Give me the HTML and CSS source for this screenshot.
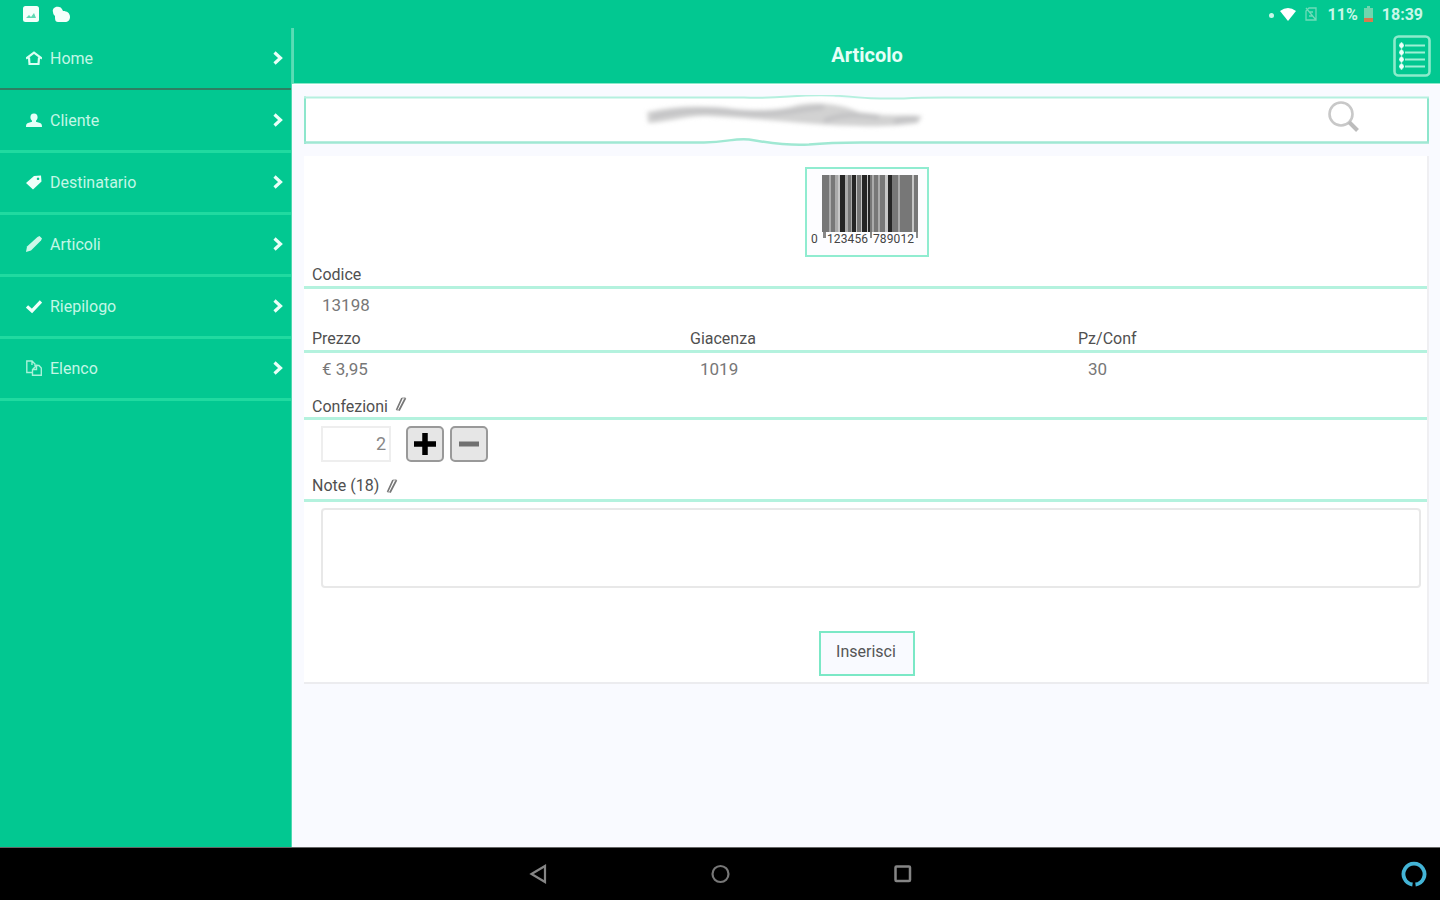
FILE: index.html
```html
<!DOCTYPE html>
<html lang="it">
<head>
<meta charset="UTF-8">
<title>Articolo</title>
<link rel="stylesheet" href="styles.css">
</head>
<body>
    <div class="status-bar">
        <div class="status-left">
            <svg width="16" height="16" viewBox="0 0 16 16"><rect width="16" height="16" rx="2.500" fill="#f4fffb"/><path d="M3 12l3-3 2 2 3-4 2 5z" fill="#5fd9b4"/></svg>
            <svg width="18" height="17" viewBox="0 0 18 17"><path d="M1 6C0 3 3 0 7 1c2 0 3 2 4 4 4 0 7 2 7 6 0 3-2 5-5 5H6c-3 0-3-3-3-6C2 9 1 8 1 6z" fill="#f4fffb"/></svg>
        </div>
        <div class="status-right">
            <span class="dot"></span>
            <svg class="wifi" width="16" height="13" viewBox="0 0 16 13"><path d="M0 3Q8-3 16 3L8 13z" fill="#fff"/></svg>
            <svg class="sim" width="12" height="14" viewBox="0 0 12 14"><path d="M4 1h7v12H1V4zM1 1l10 12M4 5h4M4 9h4" fill="none" stroke="#6fdcb9" stroke-width="1.300"/></svg>
            <span class="percent">11%</span>
            <svg class="battery" width="9" height="16" viewBox="0 0 9 16"><path d="M3 0h3v2h3v14H0V2h3z" fill="#6fd6ae"/><path d="M0 12h9v4H0z" fill="#d8794f"/></svg>
            <span class="time">18:39</span>
        </div>
    </div>

    <div class="main">
        <div class="sidebar">
            <a href="#" class="item active">
                <svg width="16" height="16" viewBox="0 0 16 16"><path d="M0 8.500L8 2.500l8 6M3 7.500l.5 6.500h9l.5-6.500" fill="none" stroke="#d9fff2" stroke-width="2.200"/></svg>
                <span>Home</span>
                <svg class="arrow" width="10" height="14" viewBox="0 0 10 14"><path d="M1.500 1.500L7.500 7l-6 5.500" fill="none" stroke="#e9fff8" stroke-width="3.200"/></svg>
            </a>
            <a href="#" class="item">
                <svg width="16" height="16" viewBox="0 0 16 16"><path d="M8 1.500c2.500 0 3.600 1.700 3.600 3.700 0 1.500-.7 2.800-1.600 3.500v1L14 11c1.500.5 2 1.500 2 4H0c0-2.500.5-3.500 2-4l4-1.300v-1c-.9-.7-1.600-2-1.600-3.500 0-2 1.100-3.700 3.600-3.700z" fill="#e6fff7"/></svg>
                <span>Cliente</span>
                <svg class="arrow" width="10" height="14" viewBox="0 0 10 14"><path d="M1.500 1.500L7.500 7l-6 5.500" fill="none" stroke="#e9fff8" stroke-width="3.200"/></svg>
            </a>
            <a href="#" class="item">
                <svg width="16" height="16" viewBox="0 0 16 16"><path d="M0 9l8-7 7-.5.5 6L7 15.500zM12 3.500a1.300 1.300 0 1 0 .1 0z" fill="#effffa" fill-rule="evenodd"/></svg>
                <span>Destinatario</span>
                <svg class="arrow" width="10" height="14" viewBox="0 0 10 14"><path d="M1.500 1.500L7.500 7l-6 5.500" fill="none" stroke="#e9fff8" stroke-width="3.200"/></svg>
            </a>
            <a href="#" class="item">
                <svg width="16" height="16" viewBox="0 0 16 16"><path d="M0 16l1-5.500L11.500 1 13.500 0 16 2.500 15 4.500 5 14.500z" fill="#cdf7e8"/></svg>
                <span>Articoli</span>
                <svg class="arrow" width="10" height="14" viewBox="0 0 10 14"><path d="M1.500 1.500L7.500 7l-6 5.500" fill="none" stroke="#e9fff8" stroke-width="3.200"/></svg>
            </a>
            <a href="#" class="item">
                <svg width="16" height="16" viewBox="0 0 16 16"><path d="M1 8.500l5 4.500 9-9.500" fill="none" stroke="#effffa" stroke-width="3.300"/></svg>
                <span>Riepilogo</span>
                <svg class="arrow" width="10" height="14" viewBox="0 0 10 14"><path d="M1.500 1.500L7.500 7l-6 5.500" fill="none" stroke="#e9fff8" stroke-width="3.200"/></svg>
            </a>
            <a href="#" class="item">
                <svg width="16" height="16" viewBox="0 0 16 16"><path d="M6 12.500H.8V1H6l3 3v2M6 1v4M10.500 5.500H13l2.300 2.500v7.300H6.500V9.500l4-4v4h-4" fill="none" stroke="#a9f2d9" stroke-width="1.400"/></svg>
                <span>Elenco</span>
                <svg class="arrow" width="10" height="14" viewBox="0 0 10 14"><path d="M1.500 1.500L7.500 7l-6 5.500" fill="none" stroke="#e9fff8" stroke-width="3.200"/></svg>
            </a>
        </div>

        <div class="content">
            <div class="header">
                <h1>Articolo</h1>
                <svg class="list-button" width="38" height="42" viewBox="0 0 38 42">
                    <rect x="1.500" y="1.500" width="35" height="39" rx="4" fill="none" stroke="#8cebcb" stroke-width="2.600"/>
                    <path d="M12 10.500h20M12 17.500h20M12 24.500h20M12 31.500h20" stroke="#9df0d5" stroke-width="2"/>
                    <path d="M8.500 7v28" stroke="#9df0d5" stroke-width="1.500"/>
                    <g fill="#effffa"><circle cx="8.500" cy="10.500" r="2.400"/><circle cx="8.500" cy="17.500" r="2.400"/><circle cx="8.500" cy="24.500" r="2.400"/><circle cx="8.500" cy="31.500" r="2.400"/></g>
                </svg>
            </div>

            <div class="page">
                <div class="search">
                    <svg width="1125" height="52" viewBox="0 0 1125 52">
                        <defs><filter id="soft" x="-10%" y="-50%" width="120%" height="200%"><feGaussianBlur stdDeviation="2"/></filter></defs>
                        <path d="M1 3H450C490 2 510-1 535 3 555 5 600 3 625 3H1124V48H530C500 48 490 52 472 49 455 46 440 43 425 47 415 48 400 48 380 48H1z" fill="#fff"/>
                        <path d="M1 1.500V49M1124 2v46" stroke="#8de6cc" stroke-width="2"/>
                        <path d="M0 2.500H440C480 4 490-1 530 .5 560 3 570 4 600 3.500 620 2 640 2.500 660 2.500H1125" fill="none" stroke="#b5f0df" stroke-width="2"/>
                        <path d="M0 47.500H400C425 47 430 43 445 44.500 465 48 485 51 505 49.500 530 47 550 47.500 570 47.500H1125" fill="none" stroke="#a0e8d3" stroke-width="2.500"/>
                        <g filter="url(#soft)">
                            <path d="M343 17C370 11 400 10 430 14 455 16 475 15 490 11 510 5 540 10 555 17 580 22 600 19 618 21L614 28C580 34 520 30 500 28 475 26 430 22 400 21 375 22 360 28 344 28z" fill="#d2d2d2"/>
                            <path d="M348 22C380 14 410 14 440 18 470 21 490 15 520 12M520 26C540 18 555 20 575 22M590 27C600 23 605 24 613 24" fill="none" stroke="#c3c3c5" stroke-width="5"/>
                        </g>
                    </svg>
                    <svg class="lens" width="32" height="32" viewBox="0 0 32 32"><circle cx="13" cy="13" r="11.500" fill="none" stroke="#c8c8c8" stroke-width="2.600"/><path d="M21 21l8.500 8.500" stroke="#bcbcbc" stroke-width="4"/></svg>
                </div>

                <div class="card">
                    <div class="barcode">
                        <svg width="120" height="86" viewBox="0 0 120 86">
                            <path d="M15 6h96v57H15z" fill="#c6c6c6"/>
                            <path d="M15 6h7v57h-7zM24 6h4v57h-4zM41 6h3v57h-3zM50 6h4v57h-4zM63 6h2v57h-2zM67 6h4v57h-4zM73 6h5v57h-5zM85 6h6v57h-6zM93 6h12v57H93zM107 6h4v57h-4z" fill="#777"/>
                            <path d="M22 6h2v57h-2zM28 6h3v57h-3zM38 6h3v57h-3zM44 6h1v57h-1zM65 6h2v57h-2zM71 6h2v57h-2zM91 6h2v57h-2z" fill="#aaa"/>
                            <path d="M33 6h5v57h-5zM45 6h4v57h-4zM55 6h5v57h-5zM61 6h2v57h-2zM81 6h4v57h-4z" fill="#252525"/>
                            <path d="M16 63h3v6h-3zM63 63h2v6h-2zM109 63h2v6h-2z" fill="#888"/>
                            <g class="barcode-text"><text x="4" y="74">0</text><text x="20" y="74" textLength="41">123456</text><text x="66" y="74" textLength="41">789012</text></g>
                        </svg>
                    </div>

                    <div class="labels"><span>Codice</span></div>
                    <div class="values"><span>13198</span></div>

                    <div class="labels">
                        <span>Prezzo</span>
                        <span>Giacenza</span>
                        <span>Pz/Conf</span>
                    </div>
                    <div class="values last">
                        <span>€ 3,95</span>
                        <span>1019</span>
                        <span>30</span>
                    </div>

                    <div class="labels edit">
                        <span>Confezioni</span>
                        <svg width="12" height="16" viewBox="0 0 12 16"><path d="M1.500 14L7 2M4 14.500L10.500 2" stroke="#777" stroke-width="1.700"/><path d="M7 2h3.500M1.500 14H4" stroke="#999"/></svg>
                    </div>
                    <div class="quantity">
                        <div class="number">2</div>
                        <button class="step"><svg width="24" height="24" viewBox="0 0 24 24"><path d="M12 1v22M1 12h22" stroke="#000" stroke-width="5.500"/></svg></button>
                        <button class="step"><svg width="24" height="24" viewBox="0 0 24 24"><path d="M2 12h20" stroke="#707070" stroke-width="5"/></svg></button>
                    </div>

                    <div class="labels edit note">
                        <span>Note (18)</span>
                        <svg width="12" height="16" viewBox="0 0 12 16"><path d="M1.500 14L7 2M4 14.500L10.500 2" stroke="#777" stroke-width="1.700"/><path d="M7 2h3.500M1.500 14H4" stroke="#999"/></svg>
                    </div>
                    <textarea></textarea>

                    <button class="insert">Inserisci</button>
                </div>
            </div>
        </div>
    </div>

    <div class="nav-bar">
        <span class="nav-side"></span>
        <div class="nav-buttons">
            <svg width="20" height="20" viewBox="0 0 20 20"><path d="M3.500 10L17 2v16z" fill="none" stroke="#858585" stroke-width="2.200"/></svg>
            <svg width="20" height="20" viewBox="0 0 20 20"><circle cx="10.500" cy="10" r="8" fill="none" stroke="#777" stroke-width="2.200"/></svg>
            <svg width="20" height="20" viewBox="0 0 20 20"><rect x="3.500" y="2.500" width="14.500" height="14.500" rx="1" fill="none" stroke="#858585" stroke-width="2.500"/></svg>
        </div>
        <div class="nav-side">
            <svg width="26" height="26" viewBox="0 0 26 26"><path d="M11.500 23.500a10.500 10.500 0 1 1 3 0" fill="none" stroke="#43b4d6" stroke-width="3.800"/></svg>
        </div>
    </div>
</body>
</html>
```
FILE: styles.css
```css
* {
    box-sizing: border-box;
}

body {
    font-family: Roboto, "Liberation Sans", sans-serif;
    font-size: 16px;
    margin: 0;
    height: 900px;
    display: flex;
    flex-direction: column;
    overflow: hidden;
    background-color: #f9faff;
}

svg {
    display: block;
    flex: none;
}

.status-bar {
    height: 28px;
    background-color: #02c891;
    color: #c9f7e8;
    display: flex;
    justify-content: space-between;
    align-items: center;
    padding: 0 17px 0 23px;
    font-weight: bold;
}

.status-left {
    display: flex;
    gap: 13px;
}

.status-right {
    display: flex;
    align-items: center;
}

.dot {
    width: 5px;
    height: 5px;
    border-radius: 50%;
    background-color: #c9f7e8;
    margin: 3px 6px 0 0;
}

.wifi {
    margin-right: 9px;
}

.sim {
    margin-right: 11px;
}

.battery {
    margin: 0 9px 0 6px;
}

.main {
    height: 819px;
    display: flex;
}

.sidebar {
    flex: none;
    width: 292px;
    background-color: #02c891;
    padding-top: 1px;
    border-right: 1px solid #4ed9b0;
}

.item {
    height: 62px;
    display: flex;
    align-items: center;
    padding: 0 8px 1px 26px;
    border-bottom: 3px solid #20daa0;
    color: #c3f7e6;
    text-decoration: none;
}

.item span {
    margin-left: 8px;
}

.item.active {
    border-bottom-color: #2e7f62;
    border-bottom-width: 2px;
    height: 61px;
    margin-bottom: 1px;
}

.item .arrow {
    margin-left: auto;
}

.content {
    flex: 1;
    min-width: 0;
    display: flex;
    flex-direction: column;
}

.header {
    height: 56px;
    background-color: #02c891;
    border-left: 2px solid #5adcb5;
    border-bottom: 1px solid #8ce8cb;
    display: flex;
    align-items: center;
    justify-content: flex-end;
    padding-right: 9px;
}

.header h1 {
    flex: 1;
    margin: 0;
    padding: 0 0 1px 47px;
    font-size: 20px;
    text-align: center;
    color: #e6fff7;
}

.page {
    flex: 1;
    padding: 10px 11px 0 12px;
    border-top: 1px solid #fff;
}

.search {
    height: 49px;
    display: flex;
}

.search .lens {
    margin: 6px 0 0 -101px;
}

.card {
    height: 528px;
    margin-top: 12px;
    padding-top: 11px;
    background-color: #fff;
    border-right: 2px solid #efeff2;
    border-bottom: 2px solid #ececef;
}

.barcode {
    width: 124px;
    height: 90px;
    margin: 0 0 0 501px;
    border: 2px solid #90ecd0;
    background-color: #fdfdff;
}

.barcode-text {
    font-size: 12px;
    fill: #444;
}

.labels {
    height: 32px;
    padding: 0 8px 1px;
    border-bottom: 3px solid #b4f2de;
    color: #505050;
    display: flex;
    align-items: flex-end;
    line-height: 20px;
}

.labels span {
    flex: none;
    width: 378px;
}

.labels span:nth-child(2) {
    width: 388px;
}

.labels span:nth-child(3) {
    width: auto;
}

.labels.edit {
    padding-bottom: 0;
}

.labels.edit span {
    width: auto;
}

.labels.edit svg {
    margin: 0 0 5px 7px;
}

.values {
    height: 32px;
    padding: 6px 18px 0;
    color: #777;
    font-size: 17px;
    line-height: 20px;
    display: flex;
}

.values span {
    flex: none;
    width: 378px;
}

.values span:nth-child(2) {
    width: 388px;
}

.values span:nth-child(3) {
    width: auto;
}

.values.last {
    height: 35px;
}

.quantity {
    height: 50px;
    padding: 6px 0 0 17px;
    display: flex;
}

.number {
    width: 70px;
    height: 36px;
    margin-right: 15px;
    padding-right: 3px;
    border: 2px solid #eeeeee;
    font-size: 18px;
    line-height: 32px;
    text-align: right;
    color: #888;
}

.step {
    width: 38px;
    height: 36px;
    margin-right: 6px;
    padding: 0;
    display: flex;
    align-items: center;
    justify-content: center;
    background-color: #e6e6e6;
    border: 2px solid #999;
    border-radius: 5px;
}

.labels.edit.note {
    padding-bottom: 3px;
}

.labels.edit.note svg {
    margin-bottom: 2px;
}

textarea {
    display: block;
    width: 1100px;
    height: 80px;
    margin: 6px 0 0 17px;
    border: 2px solid #e8e8e8;
    border-radius: 4px;
    resize: none;
}

.insert {
    display: block;
    width: 96px;
    height: 45px;
    margin: 43px 0 0 515px;
    padding: 0 2px 4px 0;
    border: 2px solid #7be8c6;
    background-color: #f9faff;
    font-family: inherit;
    font-size: 16px;
    color: #555;
}

.nav-bar {
    height: 53px;
    background-color: #000;
    border-top: 1px solid #666;
    display: flex;
    justify-content: space-between;
    align-items: center;
}

.nav-side {
    width: 39px;
}

.nav-buttons {
    display: flex;
    gap: 162px;
}
```
